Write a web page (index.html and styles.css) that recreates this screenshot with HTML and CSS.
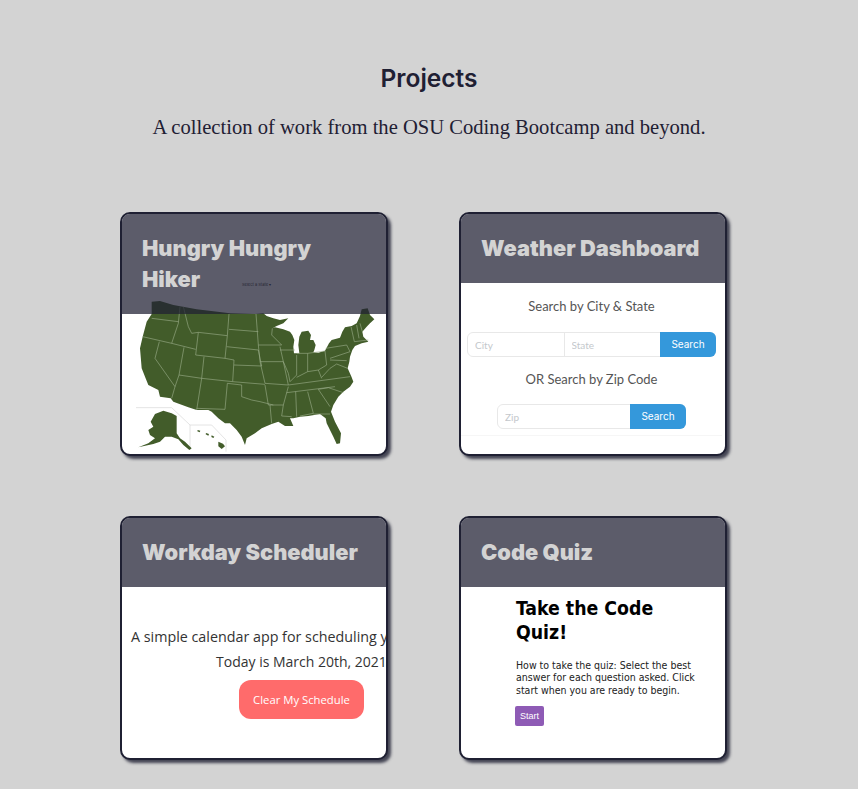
FILE: index.html
```html
<!DOCTYPE html>
<html lang="en">
<head>
  <meta charset="UTF-8" />
  <meta name="viewport" content="width=device-width, initial-scale=1.0"/>
  <title>Projects</title>
  <link rel="stylesheet" href="styles.css">
</head>
<body>
  <section class="intro">
    <h1>Projects</h1>
    <p>A collection of work from the OSU Coding Bootcamp and beyond.</p>
  </section>

  <div class="grid">
    <article class="card">
      <h2 class="card-title">Hungry Hungry Hiker</h2>
      <div class="shot">
        <svg class="map" viewBox="-24 -228 792 720" aria-hidden="true">
          <path class="inset" d="M18 353H125L180 405V480M180 405H245L288 450V485"/>
          <path class="land" d="M65 35L90 33L130 45L200 58L300 70L375 72L400 70L410 78L430 85L450 90L475 85L460 100L440 108L427 115L435 112L460 118L480 125L487 135L493 150L490 170L492 190L508 190L505 165L508 140L515 125L535 122L543 135L540 150L550 150L557 165L553 180L550 187L565 188L585 182L597 160L605 150L630 143L637 125L645 112L665 108L680 100L690 78L695 58L713 55L720 75L733 88L720 100L710 110L697 125L700 140L715 155L695 160L675 168L667 180L660 200L658 215L653 235L665 262L670 275L660 290L640 305L625 320L610 345L603 365L615 395L633 430L630 460L620 462L610 440L590 400L587 385L570 372L535 378L510 380L490 385L480 385L490 408L465 408L445 395L425 402L395 415L375 430L350 445L345 465L335 440L320 420L300 400L285 400L265 385L245 365L235 360L200 360L175 352L130 335L122 325L90 320L85 300L55 285L48 268L35 235L30 175L38 140L50 95L65 72Z"/>
          <path class="land" d="M75 372L100 362L125 370L140 378L140 430L150 445L165 455L185 475L178 480L160 465L145 448L125 440L105 440L90 455L70 462L25 472L55 460L75 445L60 435L55 420L70 410L62 395Z"/>
          <path class="land" d="M203 420l8 2-2 5-7-3zM228 429l9 3-2 5-8-4zM245 436l8 4-3 4-6-3zM265 455l14 6 6 8-10 8-10-8z"/>
          <path class="lines" d="M65 85L145 95M150 50L145 100L125 160M38 140L125 160L197 178M160 50L175 110L185 130L205 127L292 137M205 127L197 195L285 205M297 72L292 137L285 205M222 200L215 265L308 275L312 210L285 205M88 155L75 205L135 290L125 325M162 172L147 255L135 290M147 255L215 265L200 360M200 355L285 358L292 280L335 285L335 320L365 330L390 335L430 345M297 118L385 125M290 170L385 180L395 228L312 225M308 275L405 283M378 72L385 165L455 165M385 165L390 215L460 215L450 170M427 115L425 135L455 165M390 215L405 280L475 285L460 215M405 285L415 345L460 345L475 290M420 345L425 400M460 345L455 378L485 380M497 305L500 380M533 305L550 370L510 378M550 372L600 372M475 285L660 260M470 308L615 290M565 298L595 293L640 308M565 298L600 350M450 180L495 180M500 195L500 255L480 275M460 215L475 250L480 275M500 190L533 190L585 183M533 190L533 245L500 262M585 183L590 225L565 240L533 245M565 240L575 265M575 262L600 235L620 222L653 235M600 210L650 212M587 175L650 165L660 185L600 205M663 110L673 155M680 105L687 145M673 155L715 150M690 100L697 125"/>
        </svg>
        <span class="state-select">Select a State ▾</span>
      </div>
    </article>

    <article class="card">
      <h2 class="card-title">Weather Dashboard</h2>
      <div class="shot weather">
        <p class="weather-label">Search by City &amp; State</p>
        <form class="search search-wide">
          <input type="text" placeholder="City">
          <input type="text" placeholder="State">
          <button type="button">Search</button>
        </form>
        <p class="weather-label">OR Search by Zip Code</p>
        <form class="search search-zip">
          <input type="text" placeholder="Zip">
          <button type="button">Search</button>
        </form>
        <hr class="weather-rule">
      </div>
    </article>

    <article class="card">
      <h2 class="card-title">Workday Scheduler</h2>
      <div class="shot scheduler">
        <p class="lead">A simple calendar app for scheduling your work day</p>
        <p class="today">Today is March 20th, 2021</p>
        <button class="clear-btn" type="button">Clear My Schedule</button>
      </div>
    </article>

    <article class="card">
      <h2 class="card-title">Code Quiz</h2>
      <div class="shot quiz">
        <h3>Take the Code Quiz!</h3>
        <p>How to take the quiz: Select the best answer for each question asked. Click start when you are ready to begin.</p>
        <button class="start-btn" type="button">Start</button>
      </div>
    </article>
  </div>
</body>
</html>
```

FILE: styles.css
```css
:root {
  --bg: #d3d3d3;
  --ink: #1f2033;
}

* {
  box-sizing: border-box;
}

html, body {
  height: 789px;
  overflow: hidden;
}

body {
  margin: 0;
  background-color: var(--bg);
  color: var(--ink);
  font-family: Inter, "Liberation Sans", sans-serif;
}

.intro {
  padding-top: 63px;
  text-align: center;
}

.intro h1 {
  margin: 0;
  font-size: 24.5px;
  line-height: 30px;
  font-weight: 600;
}

.intro p {
  margin: 21px 0 0;
  font-family: "Liberation Serif", serif;
  font-size: 20.6px;
  line-height: 26px;
}

.grid {
  display: grid;
  grid-template-columns: 268px 268px;
  grid-auto-rows: 244px;
  column-gap: 71px;
  row-gap: 60px;
  margin: 72px 0 0 120px;
}

.card {
  position: relative;
  overflow: hidden;
  background: #fff;
  border: 2px solid var(--ink);
  border-radius: 10px;
  box-shadow: 3px 3px 3px rgba(31, 32, 51, 0.8);
}

.card-title {
  position: absolute;
  z-index: 1;
  top: 0;
  left: 0;
  right: 0;
  margin: 0;
  padding: 19px 20px;
  background: rgba(31, 32, 51, 0.73);
  color: #d3d3d3;
  font-size: 21.8px;
  line-height: 31px;
  font-weight: 900;
}

.shot {
  height: 100%;
}

/* map card */
.state-select {
  position: absolute;
  top: 68px;
  left: 120px;
  font-size: 4px;
  color: #333;
}

.map {
  display: block;
  width: 100%;
  height: 100%;
  filter: blur(0.3px);
}

.land {
  fill: #425c2a;
}

.lines {
  fill: none;
  stroke: #9db08d;
  stroke-width: 1.8;
}

.inset {
  fill: none;
  stroke: #ddd;
  stroke-width: 2.4;
}

/* weather card */
.weather {
  display: flex;
  flex-direction: column;
  align-items: center;
  padding: 84px 3px 0 0;
  font-family: Lato, sans-serif;
}

.weather-label {
  margin: 0;
  font-size: 13px;
  line-height: 17px;
  color: #555;
}

.search {
  display: flex;
  height: 25px;
  border: 1px solid #e8e8e8;
  border-radius: 6px;
  margin-top: 17px;
  margin-bottom: 14px;
}

.search-wide {
  width: 249px;
}

.search-zip {
  width: 189px;
  margin-top: 16px;
  margin-bottom: 6px;
}

.search-zip button {
  width: 55px;
}

.search input {
  flex: 1;
  min-width: 0;
  padding: 0 7px;
  border: 0;
  border-right: 1px solid #e8e8e8;
  background: transparent;
  font-family: inherit;
  font-size: 10px;
}

.search input:last-of-type {
  border-right: 0;
}

.search input::placeholder {
  color: #c4c8cc;
}

.search button {
  width: 56px;
  margin: -1px -1px -1px 0;
  border: 0;
  border-radius: 0 6px 6px 0;
  background: #3498db;
  color: #fff;
  font-family: Inter, sans-serif;
  font-size: 10px;
  padding: 0 0 2px;
}

.weather-rule {
  width: 100%;
  margin: 0;
  border: 0;
  border-top: 1px solid #f6f6f6;
}

/* scheduler card */
.scheduler {
  padding-top: 98px;
  font-family: "Open Sans", sans-serif;
  color: #333;
  font-size: 14px;
  white-space: nowrap;
}

.lead {
  margin: 11px 0 0 9px;
  font-size: 14.3px;
  line-height: 19px;
}

.today {
  margin: 6px 0 0 94px;
  line-height: 19px;
}

.clear-btn {
  display: block;
  width: 125px;
  height: 39px;
  margin: 9px 0 0 117px;
  border: 0;
  border-radius: 12px;
  background: #ff6b6b;
  color: #fff;
  font-family: inherit;
  font-size: 11.3px;
}

/* quiz card */
.quiz {
  padding: 79px 30px 0 55px;
  font-family: "DejaVu Sans Condensed", "DejaVu Sans", sans-serif;
  font-stretch: condensed;
}

.quiz h3 {
  margin: 0;
  font-size: 19.3px;
  line-height: 24px;
  font-weight: 700;
  color: #000;
}

.quiz p {
  margin: 14px 0 0;
  font-size: 10.5px;
  line-height: 12.3px;
  color: #222;
}

.start-btn {
  display: block;
  width: 29px;
  height: 20px;
  margin: 10px 0 0 -1px;
  padding: 0;
  border: 0;
  border-radius: 2px;
  background: #8e5bb5;
  color: #fff;
  font-family: "Liberation Sans", sans-serif;
  font-size: 9px;
}
```
